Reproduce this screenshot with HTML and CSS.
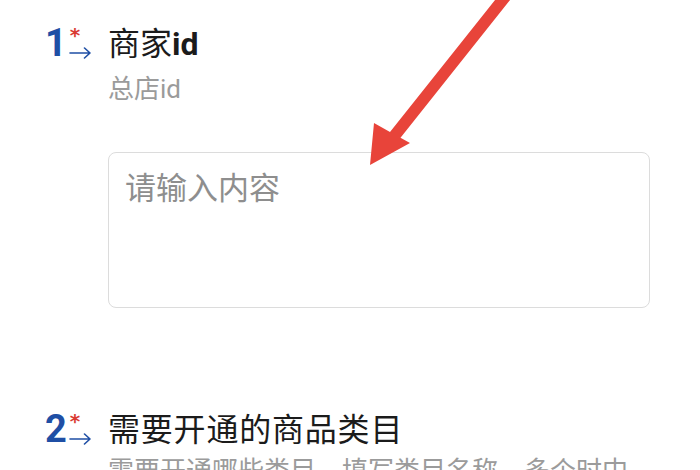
FILE: index.html
```html
<!DOCTYPE html>
<html lang="zh-CN">
<head>
<meta charset="utf-8">
<title>表单</title>
<link rel="stylesheet" href="styles.css">
</head>
<body>
<div class="page">
  <div class="question">
    <div class="marker">
      <span class="num">1</span>
      <span class="side">
        <span class="req">*</span>
        <svg class="go" width="23" height="12" viewBox="0 0 23 12"><path d="M1 6 H21 M15.5 1 L21 6 L15.5 11" fill="none" stroke="#1f4fa5" stroke-width="1.6" stroke-linecap="round" stroke-linejoin="round"/></svg>
      </span>
    </div>
    <div class="body">
      <div class="title">商家<b>id</b></div>
      <div class="desc">总店id</div>
      <div class="input">请输入内容</div>
    </div>
  </div>
  <div class="question q2">
    <div class="marker">
      <span class="num">2</span>
      <span class="side">
        <span class="req">*</span>
        <svg class="go" width="23" height="12" viewBox="0 0 23 12"><path d="M1 6 H21 M15.5 1 L21 6 L15.5 11" fill="none" stroke="#1f4fa5" stroke-width="1.6" stroke-linecap="round" stroke-linejoin="round"/></svg>
      </span>
    </div>
    <div class="body">
      <div class="title wide">需要开通的商品类目</div>
      <div class="desc tight">需要开通哪些类目，填写类目名称，多个时中</div>
    </div>
  </div>
  <svg class="pointer" width="700" height="470" viewBox="0 0 700 470">
    <polygon points="503,-10 518,-10 400.5,137.7 410,143 370,165 374,123 390,132" fill="#e8443a"/>
  </svg>
</div>
</body>
</html>
```

FILE: styles.css
```css
html, body {
  margin: 0;
  padding: 0;
  background: #ffffff;
}
body {
  width: 700px;
  height: 470px;
  overflow: hidden;
  font-family: Roboto, "Noto Sans CJK SC", sans-serif;
}
.page {
  position: relative;
  padding: 22px 50px 0 45px;
}
.question {
  display: flex;
  align-items: flex-start;
}
.q2 {
  margin-top: 100px;
}
.marker {
  width: 63px;
  flex: none;
  display: flex;
  align-items: flex-start;
  padding-top: 5px;
}
.num {
  font-family: Roboto, sans-serif;
  font-weight: 700;
  font-size: 38px;
  line-height: 33px;
  color: #1f4fa5;
}
.side {
  display: flex;
  flex-direction: column;
  margin-left: 2px;
}
.req {
  color: #d93a32;
  font-family: "DejaVu Sans", sans-serif;
  font-weight: 700;
  font-size: 20px;
  line-height: 16px;
  height: 16px;
  margin-left: 1px;
}
.go {
  display: block;
  margin-top: 4px;
}
.body {
  flex: 1;
}
.title {
  font-size: 32px;
  line-height: 44px;
  color: #1b1b1b;
  font-weight: 400;
}
.title.wide {
  letter-spacing: 0.8px;
}
.title b {
  font-weight: 700;
}
.desc {
  margin-top: 6px;
  font-size: 26px;
  line-height: 34px;
  color: #9b9b9b;
  white-space: nowrap;
}
.desc.tight {
  margin-top: 2px;
}
.input {
  margin-top: 46px;
  height: 122px;
  border: 1px solid #dcdcdc;
  border-radius: 8px;
  padding: 16px 16px;
  font-size: 31px;
  line-height: 40px;
  color: #8e8e8e;
  box-sizing: content-box;
}
.pointer {
  position: absolute;
  left: 0;
  top: 0;
}
```
